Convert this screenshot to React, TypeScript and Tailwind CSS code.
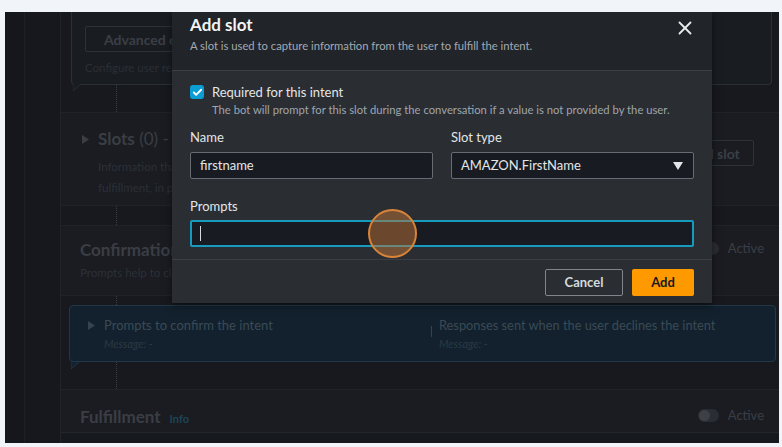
import { X, Check } from "lucide-react";

function Connector({ h }: { h: number }) {
  return (
    <div className="flex shrink-0" style={{ height: h }}>
      <div className="ml-[55px] border-l border-dotted border-[#3a3e44]" />
    </div>
  );
}

function Caret({ color }: { color: string }) {
  return (
    <svg width="7" height="9" viewBox="0 0 7 9">
      <path d="M0 0 L7 4.5 L0 9 Z" fill={color} />
    </svg>
  );
}

function Toggle() {
  return (
    <div className="flex items-center gap-[9px]">
      <div className="w-[21px] h-[13px] rounded-full bg-[#2a2d33] flex items-center px-[1px]">
        <div className="w-[11px] h-[11px] rounded-full bg-[#3d4147]" />
      </div>
      <span className="text-[13px] text-[#3a3e44]">Active</span>
    </div>
  );
}

function Background() {
  return (
    <div className="flex h-full">
      <div className="w-[20px] bg-[#15171c] border-r border-[#1d2026]" />
      <div className="w-[35px] bg-[#16181d]" />
      <main className="flex-1 flex flex-col overflow-hidden border-l border-[#202329] bg-[#17191f]">
        {/* Advanced box (top, cut off) */}
        <div className="relative shrink-0 ml-[10px] mr-[7px] h-[73px] border-x border-b border-[#2b2f36] rounded-b-[4px] bg-[#191c21] px-[13px] pt-[14px]">
          <div className="h-[26px] w-[150px] border border-[#2d3138] rounded-[2px] flex items-center justify-center">
            <span className="text-[14px] font-bold text-[#3b3f46]">Advanced options</span>
          </div>
          <p className="mt-[8px] text-[11.5px] text-[#2b2f35] leading-[16px]">
            Configure user responses and prompt settings
          </p>
          <svg className="absolute left-[1px] top-[72px]" width="10" height="8" viewBox="0 0 10 8">
            <path d="M0 0 L0 7 L8 0" fill="#191c21" stroke="#2b2f36" strokeWidth="1" />
          </svg>
        </div>
        <Connector h={27} />

        {/* Slots */}
        <section className="shrink-0 h-[94px] bg-[#1a1c22] border-y border-[#1f2228] pl-[21px] pr-[25px] pt-[14px] flex justify-between">
          <div>
            <div className="flex items-center gap-[9px] leading-[24px]">
              <Caret color="#3a3e44" />
              <span className="text-[17px] text-[#3a3e44]">
                <b>Slots</b> (0) - <span>Optional</span>
              </span>
            </div>
            <p className="ml-[16px] mt-[5px] text-[11.5px] leading-[21px] text-[#2c3036] w-[480px]">
              Information that a bot needs to fulfill the intent. The bot elicits slot values from the user during
              fulfillment, in priority order.
            </p>
          </div>
          <div className="mt-[13px] h-[26px] w-[80px] border border-[#2d3138] rounded-[2px] flex items-center justify-center">
            <span className="text-[14px] font-bold text-[#3b3f46]">Add slot</span>
          </div>
        </section>
        <Connector h={19} />

        {/* Confirmation */}
        <section className="shrink-0 h-[71px] bg-[#1a1c22] border-y border-[#1f2228] pl-[19px] pr-[15px] pt-[12px] flex justify-between">
          <div>
            <h3 className="text-[17px] font-bold leading-[24px] text-[#3a3e44]">Confirmation</h3>
            <p className="mt-[3px] text-[11.5px] leading-[16px] text-[#2c3036]">
              Prompts help to clarify whether the user really wants to fulfill the intent.
            </p>
          </div>
          <div className="pt-[1px]">
            <Toggle />
          </div>
        </section>
        <Connector h={9} />
        <div className="relative shrink-0 ml-[8px] mr-[3px] h-[57px] rounded-[4px] border border-[#22384a] bg-[#12212d] flex items-start pt-[9px]">
          <div className="w-[361px] pl-[18px]">
            <div className="flex items-center gap-[9px] leading-[20px]">
              <Caret color="#34444f" />
              <span className="text-[13px] text-[#3b4a55]">Prompts to confirm the intent</span>
            </div>
            <p className="ml-[16px] text-[11px] italic leading-[18px] text-[#2b3a45]">Message: -</p>
          </div>
          <div className="mt-[11px] h-[11px] border-l border-[#34444f]" />
          <div className="pl-[7px]">
            <p className="text-[12.8px] leading-[20px] text-[#3b4a55]">Responses sent when the user declines the intent</p>
            <p className="text-[11px] italic leading-[18px] text-[#2b3a45]">Message: -</p>
          </div>
          <svg className="absolute left-[1px] top-[56px]" width="10" height="8" viewBox="0 0 10 8">
            <path d="M0 0 L0 7 L8 0" fill="#12212d" stroke="#22384a" strokeWidth="1" />
          </svg>
        </div>
        <Connector h={27} />

        {/* Fulfillment */}
        <section className="shrink-0 h-[43px] overflow-hidden bg-[#1a1c22] border-t border-[#1f2228] pl-[19px] pr-[15px] pt-[15px]">
          <div className="flex justify-between">
            <div className="flex items-baseline gap-[9px]">
              <h3 className="text-[17px] font-bold leading-[24px] text-[#3a3e44]">Fulfillment</h3>
              <span className="text-[11px] font-bold text-[#1d4656]">Info</span>
            </div>
            <div className="pt-[1px]">
              <Toggle />
            </div>
          </div>
          <p className="text-[11.5px] leading-[16px] text-[#2a2d33]">
            Run a Lambda function to fulfill the intent and inform users of the status when it's complete.
          </p>
        </section>
        <div className="flex-1 bg-[#16191e] border-t border-[#23262c]" />
      </main>
    </div>
  );
}

function Modal() {
  return (
    <div className="absolute left-[167px] top-0 w-[540px] bg-[#2a2d32] shadow-[0_2px_8px_rgba(0,0,0,0.5)]">
      <div className="h-[59px] bg-[#212429] border-b border-[#3b3f45] px-[18px] pt-[3px] flex justify-between">
        <div>
          <h2 className="text-[17px] font-bold leading-[20px] text-[#f2f3f3]">Add slot</h2>
          <p className="mt-[3px] text-[11.25px] leading-[16px] text-[#a3aab2]">
            A slot is used to capture information from the user to fulfill the intent.
          </p>
        </div>
        <X size={22} strokeWidth={2} className="text-[#e8eaec] -mr-[2px] mt-[2px]" />
      </div>

      <div className="px-[18px] pt-[11px] pb-[12px]">
        <div className="flex items-start gap-[8px]">
          <div className="mt-[3px] w-[14px] h-[14px] rounded-[3px] bg-[#0b9dd3] flex items-center justify-center">
            <Check size={11} strokeWidth={4} className="text-white" />
          </div>
          <div>
            <p className="text-[13px] leading-[20px] text-[#e3e6e8]">Required for this intent</p>
            <p className="text-[11.25px] leading-[16px] text-[#9ea6ae]">
              The bot will prompt for this slot during the conversation if a value is not provided by the user.
            </p>
          </div>
        </div>

        <div className="mt-[9px] grid grid-cols-2 gap-[18px]">
          <div>
            <label className="block text-[13px] leading-[20px] text-[#e3e6e8]">Name</label>
            <div className="mt-[5px] h-[27px] bg-[#181b22] border border-[#656c74] rounded-[2px] flex items-center px-[9px]">
              <span className="text-[13px] text-[#e3e6e8]">firstname</span>
            </div>
          </div>
          <div>
            <label className="block text-[13px] leading-[20px] text-[#e3e6e8]">Slot type</label>
            <div className="mt-[5px] h-[27px] bg-[#181b22] border border-[#656c74] rounded-[2px] flex items-center justify-between px-[9px]">
              <span className="text-[13px] text-[#e3e6e8]">AMAZON.FirstName</span>
              <svg width="10" height="8" viewBox="0 0 10 8" className="mr-[1px]">
                <path d="M0 0 H10 L5 8 Z" fill="#e3e6e8" />
              </svg>
            </div>
          </div>
        </div>

        <label className="mt-[17px] block text-[13px] leading-[20px] text-[#e3e6e8]">Prompts</label>
        <div className="relative mt-[4px] h-[27px] bg-[#181b22] border-2 border-[#169bbf] rounded-[2px] flex items-center px-[8px]">
          <span className="w-px h-[15px] bg-[#d6dadd]" />
          <div className="absolute left-[176px] top-[-13px] w-[49px] h-[49px] rounded-full border-2 border-[#d7843a] bg-[rgba(190,115,55,0.5)]" />
        </div>
      </div>

      <div className="border-t border-[#3b3f45] px-[18px] pt-[9px] pb-[7px] flex justify-end gap-[9px]">
        <button className="h-[27px] w-[78px] border border-[#7e858d] rounded-[2px] text-[13px] font-bold text-[#d5dadf]">
          Cancel
        </button>
        <button className="h-[27px] w-[62px] rounded-[2px] bg-[#ff9900] text-[13px] font-bold text-[#16191f]">
          Add
        </button>
      </div>
    </div>
  );
}

export default function App() {
  return (
    <div className="w-[782px] h-[447px] bg-[#f1f4f9] pt-[12px] pl-[5px] pr-[3px] pb-[4px] font-[Lato,sans-serif]">
      <div className="relative h-full overflow-hidden bg-[#16191f]">
        <Background />
        <Modal />
      </div>
    </div>
  );
}
